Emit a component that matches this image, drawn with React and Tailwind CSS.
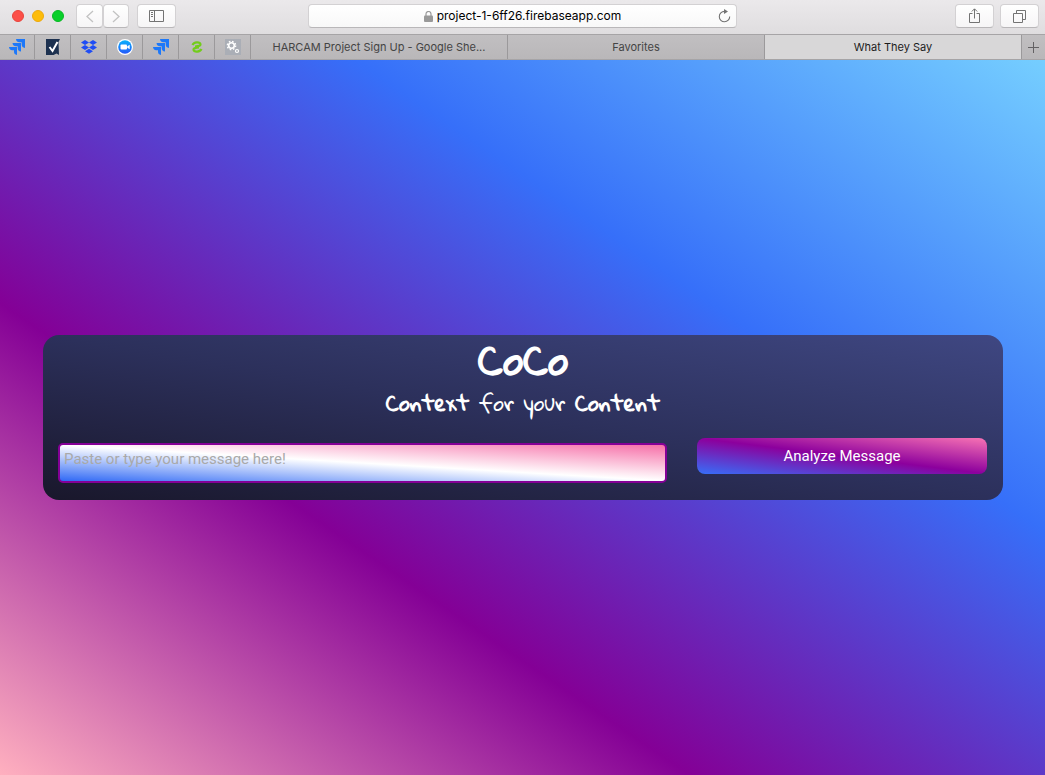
import React from "react";

const navButton =
  "flex h-6 items-center justify-center rounded border border-[#d3d1d3] border-b-[#b9b7b9] bg-linear-to-b from-white to-[#f6f5f6] text-[#737373]";
const pinned =
  "flex w-9 shrink-0 items-center justify-center border-r border-[#9b999b]";

function JiraIcon() {
  return (
    <svg width="16" height="16" viewBox="0 0 16 16" aria-hidden="true">
      <g fill="#1d78f9">
        <path d="M7 0h9v9c-2.200-.3-3.300-1.500-3.300-3.500V3.300h-2.200C8.500 3.300 7.200 2.200 7 0z" />
        <path d="M3.500 4h8.500v8.500c-2.200-.3-3.300-1.500-3.300-3.300V7.300H7C5 7.300 3.700 6.200 3.500 4z" />
        <path d="M0 8h8v8c-2-.3-3-1.300-3-3.200v-1.600H3.200C1.200 11.200.2 10 0 8z" />
      </g>
    </svg>
  );
}

function CheckIcon() {
  return (
    <svg width="14" height="16" viewBox="0 0 14 16" aria-hidden="true">
      <path d="M0 0h14l-1.500 3 .5 13-2.500-1.500L7.500 16H0z" fill="#1d3150" />
      <path d="M3.500 8l3 4L11.500 3" fill="none" stroke="#fff" strokeWidth="2" />
    </svg>
  );
}

function DropboxIcon() {
  return (
    <svg width="16" height="14" viewBox="0 0 16 14" fill="#1f4df5" aria-hidden="true">
      <path d="M4 0l4 2.500L4 5 0 2.500zM12 0l4 2.500L12 5 8 2.500zM4 5l4 2.500L4 10 0 7.500zM12 5l4 2.500-4 2.500-4-2.500zM8 8.700l4 2.500-4 2.500-4-2.500z" />
    </svg>
  );
}

function ZoomIcon() {
  return (
    <svg width="16" height="16" viewBox="0 0 16 16" aria-hidden="true">
      <defs>
        <linearGradient id="camera" x1="0" y1="0" x2="0" y2="1">
          <stop stopColor="#08b1fb" />
          <stop offset="1" stopColor="#2558fa" />
        </linearGradient>
      </defs>
      <circle cx="8" cy="8" r="8" fill="#fff" />
      <circle cx="8" cy="8" r="6.800" fill="url(#camera)" />
      <rect x="3.500" y="5.500" width="6.500" height="5" rx="1" fill="#fff" />
      <path d="M10.300 7.300l2.400-1.600v4.600l-2.400-1.600z" fill="#fff" />
    </svg>
  );
}

function GreenIcon() {
  return (
    <svg width="12" height="12" viewBox="0 0 12 12" fill="none" stroke="#72cc1b" strokeWidth="2.200" aria-hidden="true">
      <path d="M1.500 4C3 .8 8.800.6 9.500 3.300c.2 1.500-2.500 1.900-5.500 2.200M10.500 8C9 11.200 3.200 11.400 2.500 8.700c-.2-1.500 2.500-1.900 5.500-2.200" />
    </svg>
  );
}

function GearsIcon() {
  return (
    <svg width="16" height="16" viewBox="0 0 16 16" aria-hidden="true">
      <rect width="16" height="16" fill="#aaaeb6" />
      <circle cx="6.500" cy="6.500" r="2.800" fill="none" stroke="#fff" strokeWidth="1.600" />
      <circle cx="6.500" cy="6.500" r="4.200" fill="none" stroke="#fff" strokeWidth="1.300" strokeDasharray="1.650 1.650" />
      <circle cx="12" cy="12" r="1.500" fill="none" stroke="#fff" strokeWidth="1.200" />
    </svg>
  );
}

const pins = [
  ["Jira board", JiraIcon],
  ["Checklist", CheckIcon],
  ["Dropbox", DropboxIcon],
  ["Zoom", ZoomIcon],
  ["Jira backlog", JiraIcon],
  ["Sync", GreenIcon],
  ["Settings", GearsIcon],
];

function Toolbar() {
  return (
    <header className="flex h-[34px] shrink-0 items-start bg-linear-to-b from-[#ebe9eb] to-[#dfdddf] px-1 pt-1">
      <div className="flex h-6 flex-[304] items-center">
        <div className="ml-2 flex gap-2">
          <button aria-label="Close" className="size-3 rounded-full border border-[#e8443c] bg-[#fc4f48]" />
          <button aria-label="Minimize" className="size-3 rounded-full border border-[#eda90d] bg-[#fdbc0a]" />
          <button aria-label="Full screen" className="size-3 rounded-full border border-[#08b824] bg-[#09cf2a]" />
        </div>
        <button aria-label="Back" className={`${navButton} ml-3 w-[27px]`}>
          <svg width="8" height="13" viewBox="0 0 8 13" fill="none" stroke="#c2c2c2" strokeWidth="1.300"><path d="M7 1L1 6.500 7 12" /></svg>
        </button>
        <button aria-label="Forward" className={`${navButton} w-[26px]`}>
          <svg width="8" height="13" viewBox="0 0 8 13" fill="none" stroke="#c2c2c2" strokeWidth="1.300"><path d="M1 1l6 5.500L1 12" /></svg>
        </button>
        <button aria-label="Sidebar" className={`${navButton} ml-2 w-[39px]`}>
          <svg width="15" height="12" viewBox="0 0 15 12" fill="none" stroke="currentColor"><path d="M.5.5h14v11H.5zM5.500.5v11M2 2.500h2M2 4.500h2M2 6.500h2" /></svg>
        </button>
      </div>
      <div className="flex h-6 flex-[419] items-center rounded border border-[#d3d1d3] border-b-[#b9b7b9] bg-linear-to-b from-white to-[#f8f8f8] px-1">
        <span className="w-4" />
        <div className="flex flex-1 items-center justify-center gap-1">
          <svg width="9" height="11" viewBox="0 0 9 11" aria-hidden="true"><rect y="4.500" width="9" height="6.500" rx="1" fill="#999" /><path d="M2 5V3a2.500 2.500 0 015 0v2" fill="none" stroke="#999" strokeWidth="1.200" /></svg>
          <span className="font-['Inter',sans-serif] text-xs leading-5 text-black">project-1-6ff26.firebaseapp.com</span>
        </div>
        <button aria-label="Reload" className="flex size-4 items-center justify-center">
          <svg width="13" height="14" viewBox="0 0 13 14" fill="none" stroke="#737373" strokeWidth="1.100"><path d="M11.700 7.500A5.200 5.200 0 116.500 2.400" /><path d="M6 0l4 2.400L6 5z" fill="#737373" stroke="none" /></svg>
        </button>
      </div>
      <div className="flex h-6 flex-[304] items-center justify-end gap-[6px]">
        <button aria-label="Share" className={`${navButton} w-[39px]`}>
          <svg width="11" height="16" viewBox="0 0 11 16" fill="none" stroke="currentColor"><path d="M3.500 5.500h-3v9h10v-9h-3M5.500 10.500V1M2.800 3.500L5.500.8l2.700 2.700" /></svg>
        </button>
        <button aria-label="Show tabs" className={`${navButton} mr-0.5 w-[39px]`}>
          <svg width="13" height="13" viewBox="0 0 13 13" fill="none" stroke="currentColor"><path d="M.5 3.500h9v9h-9zM3.500 3V.5h9v9H10" /></svg>
        </button>
      </div>
    </header>
  );
}

function TabBar() {
  const tab = "min-w-0 flex-1 truncate border-r border-[#9b999b] px-4 text-center";
  return (
    <nav aria-label="Tabs" className="flex h-[26px] shrink-0 border-y border-[#a6a4a6] bg-linear-to-b from-[#c1bfc1] to-[#b9b7b9] font-['Inter',sans-serif] text-[11px] leading-6 text-[#444]">
      {pins.map(([label, Icon], i) => (
        <button key={label} aria-label={label} className={i === 0 ? `${pinned} -ml-px` : pinned}>
          <Icon />
        </button>
      ))}
      <button className={tab}>HARCAM Project Sign Up - Google She...</button>
      <button className={tab}>Favorites</button>
      <button className={`${tab} bg-[#d8d7d8] text-[#1c1c1c]`}>What They Say</button>
      <button aria-label="New tab" className="flex w-[23px] shrink-0 items-center justify-center">
        <svg width="11" height="11" viewBox="0 0 11 11" stroke="#636163"><path d="M5.500 0v11M0 5.500h11" /></svg>
      </button>
    </nav>
  );
}

export default function App() {
  return (
    <div className="flex min-h-screen flex-col">
      <Toolbar />
      <TabBar />
      <main className="flex flex-1 items-center justify-center bg-[linear-gradient(to_top_right,#ffb0bf,#840096_33%,#366ff9_67%,#75ceff)] pr-[42px] pl-[43px]">
        <form
          onSubmit={(e) => e.preventDefault()}
          className="flex w-full flex-col rounded-2xl bg-[linear-gradient(to_top_right,#19172b,#2c305b_50%,#3f4782)] px-[15px] pb-[17px] text-white"
        >
          <h1 className="text-center font-['Gloria_Hallelujah','Comic_Neue','Lato',cursive] text-[40px] leading-[48px] font-bold">CoCo</h1>
          <p className="mt-1 text-center font-['Gloria_Hallelujah','Comic_Neue','Lato',cursive] text-[21px] leading-[30px]">
            <b>Context</b> for your <b>Content</b>
          </p>
          <div className="mt-[18px] grid grid-cols-[609fr_290fr] items-start gap-[30px] pr-px">
            <textarea
              aria-label="Message"
              placeholder="Paste or type your message here!"
              rows={1}
              className="mt-2 block h-10 w-full resize-none rounded-[5px] border-2 border-[#840096] bg-[linear-gradient(to_top_right,#3069f5,#ffffff_50%,#f66fa8)] px-1 py-1 font-['Roboto',sans-serif] text-[15px] leading-5 text-[#222] outline-none placeholder:text-[#a9a9a9]"
            />
            <button className="mt-[3px] h-9 w-full rounded-lg bg-[linear-gradient(to_top_right,#366ff9,#8c009d_50%,#f873b4)] font-['Roboto',sans-serif] text-[15px] leading-5 text-white">
              Analyze Message
            </button>
          </div>
        </form>
      </main>
    </div>
  );
}
